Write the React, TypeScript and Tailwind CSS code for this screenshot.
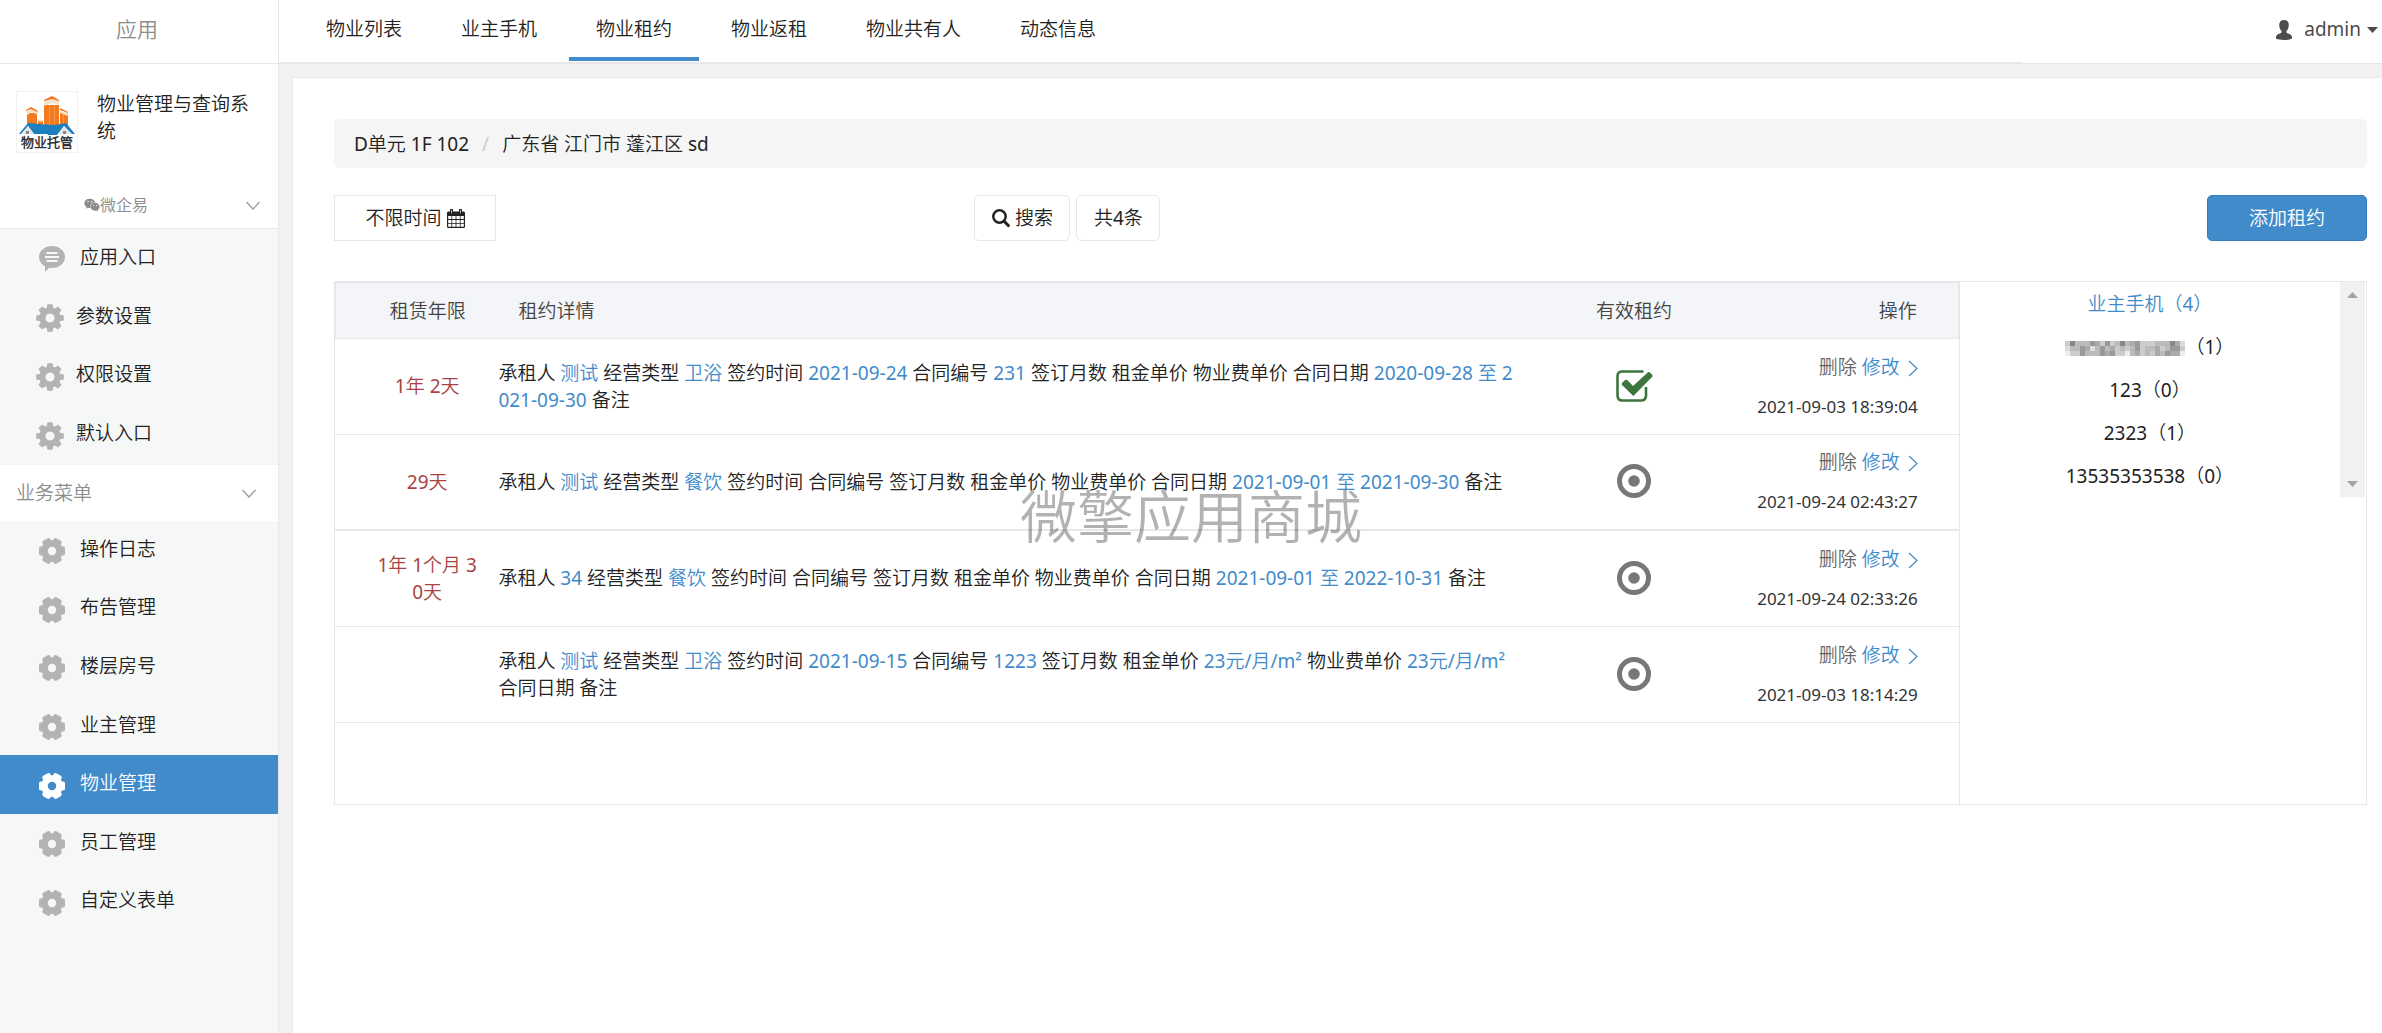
import { Fragment, type ReactNode } from "react";
import { FaWeixin } from "react-icons/fa";

const TABS = ["物业列表", "业主手机", "物业租约", "物业返租", "物业共有人", "动态信息"];
const SETTINGS = ["应用入口", "参数设置", "权限设置", "默认入口"];
const MENU = ["操作日志", "布告管理", "楼层房号", "业主管理", "物业管理", "员工管理", "自定义表单"];

type Lease = {
  term: string;
  // label / value pairs shown in the detail column
  detail: [string, string?][];
  valid: boolean;
  time: string;
};

const LEASES: Lease[] = [
  {
    term: "1年 2天",
    detail: [
      ["承租人", "测试"],
      ["经营类型", "卫浴"],
      ["签约时间", "2021-09-24"],
      ["合同编号", "231"],
      ["签订月数"],
      ["租金单价"],
      ["物业费单价"],
      ["合同日期", "2020-09-28 至 2021-09-30"],
      ["备注"],
    ],
    valid: true,
    time: "2021-09-03 18:39:04",
  },
  {
    term: "29天",
    detail: [
      ["承租人", "测试"],
      ["经营类型", "餐饮"],
      ["签约时间"],
      ["合同编号"],
      ["签订月数"],
      ["租金单价"],
      ["物业费单价"],
      ["合同日期", "2021-09-01 至 2021-09-30"],
      ["备注"],
    ],
    valid: false,
    time: "2021-09-24 02:43:27",
  },
  {
    term: "1年 1个月 30天",
    detail: [
      ["承租人", "34"],
      ["经营类型", "餐饮"],
      ["签约时间"],
      ["合同编号"],
      ["签订月数"],
      ["租金单价"],
      ["物业费单价"],
      ["合同日期", "2021-09-01 至 2022-10-31"],
      ["备注"],
    ],
    valid: false,
    time: "2021-09-24 02:33:26",
  },
  {
    term: "",
    detail: [
      ["承租人", "测试"],
      ["经营类型", "卫浴"],
      ["签约时间", "2021-09-15"],
      ["合同编号", "1223"],
      ["签订月数"],
      ["租金单价", "23元/月/m²"],
      ["物业费单价", "23元/月/m²"],
      ["合同日期"],
      ["备注"],
    ],
    valid: false,
    time: "2021-09-03 18:14:29",
  },
];

/* ---------- icons ---------- */

function BubbleIcon() {
  return (
    <svg viewBox="0 0 26 26" className="w-[26px] h-[26px] shrink-0" fill="currentColor">
      <path
        fillRule="evenodd"
        d="M13 0C20.200 0 26 4.900 26 11S20.200 22 13 22Q11.500 22 10.200 21.700L6 26V20.200C2.400 18.300 0 14.900 0 11 0 4.900 5.800 0 13 0ZM7.500 6v2h11V6ZM6 10v2h14v-2ZM7.500 14v2h11v-2Z"
      />
    </svg>
  );
}

function CogIcon() {
  return (
    <svg viewBox="-14 -14 28 28" className="w-7 h-7 shrink-0" fill="currentColor">
      {[0, 45, 90, 135].map((a) => (
        <path key={a} transform={`rotate(${a})`} d="M-2.600 -13.800h5.200L3.600 -8v3.200h-7.200V-8ZM-2.600 13.800h5.200L3.600 8v-3.200h-7.200V8Z" />
      ))}
      <circle r="7.600" fill="none" stroke="currentColor" strokeWidth="6" />
    </svg>
  );
}

function GearIcon() {
  return (
    <svg viewBox="-13 -13 26 26" className="w-[26px] h-[26px] shrink-0">
      {[0, 60, 120, 180, 240, 300].map((a) => (
        <rect key={a} transform={`rotate(${a})`} x="6" y="-4.500" width="7.200" height="9" rx="2.400" fill="currentColor" />
      ))}
      <circle r="7.500" fill="none" stroke="currentColor" strokeWidth="6.600" />
    </svg>
  );
}

function ChevronDown() {
  return (
    <svg viewBox="0 0 14 9" className="w-[14px] h-[9px]" fill="none" stroke="#999" strokeWidth="1.200">
      <path d="M.5 1 7 8l6.500-7" />
    </svg>
  );
}

function ChevronRight() {
  return (
    <svg viewBox="0 0 10 17" className="inline-block w-[10px] h-[17px] ml-2" fill="none" stroke="currentColor" strokeWidth="1.200">
      <path d="M1 1l8 7.500L1 16" />
    </svg>
  );
}

function UserIcon() {
  return (
    <svg viewBox="0 0 16 20" className="w-4 h-5" fill="currentColor">
      <path d="M8 0c3 0 4.800 1.900 4.800 5 0 2.600-1 4.800-2.400 6v1.600c.6 1 5.600 1.700 5.600 4.400v1.600C14.500 19.600 11.500 20 8 20S1.500 19.600 0 18.600V17c0-2.700 5-3.400 5.600-4.400V11C4.200 9.800 3.200 7.600 3.200 5 3.200 1.900 5 0 8 0Z" />
    </svg>
  );
}

function CalendarIcon() {
  return (
    <svg viewBox="0 0 18 19" className="w-[18px] h-[19px]">
      <path fill="currentColor" d="M1.300 2.500H3V1a1.200 1.200 0 0 1 3 0v1.500h6V1a1.200 1.200 0 0 1 3 0v1.500h1.700Q18 2.500 18 4v13.500Q18 19 16.700 19H1.300Q0 19 0 17.500V4Q0 2.500 1.300 2.500Z" />
      <path fill="#fff" d="M1.200 7h3.200v3H1.200zM5.200 7h3.400v3H5.200zM9.400 7h3.400v3H9.400zM13.600 7h3.200v3h-3.200zM1.200 10.900h3.200v3H1.200zM5.200 10.900h3.400v3H5.200zM9.400 10.900h3.400v3H9.400zM13.600 10.900h3.200v3h-3.200zM1.200 14.800h3.200v3H1.200zM5.200 14.800h3.400v3H5.200zM9.400 14.800h3.400v3H9.400zM13.600 14.800h3.200v3h-3.200z" />
      <path stroke="#fff" strokeWidth=".6" d="M4.500 1v3.500M13.500 1v3.500" />
    </svg>
  );
}

function SearchIcon() {
  return (
    <svg viewBox="0 0 18 20" className="w-[18px] h-5" fill="none" stroke="currentColor">
      <circle cx="7.500" cy="8.500" r="6.200" strokeWidth="2.500" />
      <path d="M12 13l4.300 4.600" strokeWidth="3" strokeLinecap="round" />
    </svg>
  );
}

function CheckIcon() {
  return (
    <svg viewBox="0 0 37 32" className="inline-block w-[37px] h-8" fill="none" stroke="#3c763d">
      <path strokeWidth="2.600" d="M27.500 1.500H6.500Q1.500 1.500 1.500 6v19.500q0 5 5 5H25q5 0 5-5V17" />
      <path fill="#3c763d" stroke="none" d="M5.800 13.200 9.300 9.800Q10.500 9.300 11.500 10.300L17 16 32 2.300q1-.6 1.900.2l2.500 2.600q.6.900-.1 1.700L17.300 26 5.800 14.800Q5.300 14 5.800 13.200Z" />
    </svg>
  );
}

function RingIcon() {
  return (
    <svg viewBox="0 0 34 34" className="inline-block w-[34px] h-[34px]">
      <circle cx="17" cy="17" r="14.500" fill="none" stroke="#777" strokeWidth="5" />
      <circle cx="17" cy="17" r="5.800" fill="#777" />
    </svg>
  );
}

function Logo() {
  return (
    <svg viewBox="0 0 60 60" className="w-[60px] h-[60px]">
      <path fill="#f47a20" d="M10 21h10v13H10zM27 13h15v21H27zM43 21h8v13h-8zM21 29h5v5h-5z" />
      <path fill="#f79a52" d="M32 13h1v20h-1zM37 13h1v20h-1zM46 21h1v12h-1z" />
      <path fill="#f3e3cc" d="M10 19l5-2 6 3v3l-6-3-5 3zM27 9l8-2 7 2v4l-7-2-8 3zM43 19l8 2v3l-8-3zM20 27l5 1v2l-5-1z" />
      <path fill="#f4701a" d="M9 18l5-3 7 4-1 1-6-3-5 2zM27 8l8-4 7 4v1l-7-2-8 2zM43 16l8 4v1l-8-3z" />
      <path fill="#1b7fc0" d="M2 42 11 31l12 1 8 10h-4l-2 0H17L11 34 4 42zM23 32l14 1 12-2 9 11h-3l-8-8-7 9H31z" />
      <path fill="#e4e6e8" d="M11 34l6 8H5zM47 34l7 8H42z" />
      <path fill="#888" d="M9 39h3v3H9zM46 39h3v3h-3z" />
      <text x="30" y="55" textAnchor="middle" fontSize="13" fontWeight="700" fill="#333">
        物业托管
      </text>
    </svg>
  );
}

// Censored phone number, one hex digit of grey per block
const MOSAIC = [
  "c8bbb9ac9cb8ba9cccbbb8ad",
  "dbb9adb9bacbcb9cbbacb99c",
  "ecc9bbb9a9ccebacbcab9aae",
];

function MaskedNumber() {
  return (
    <svg viewBox="0 0 120 15" className="inline-block w-[120px] h-[15px]" role="img" aria-label="***">
      {MOSAIC.map((row, y) =>
        row.split("").map((c, x) => (
          <rect key={`${x}-${y}`} x={x * 5} y={y * 5} width="5" height="5" fill={`#${c}${c}${c}`} />
        ))
      )}
    </svg>
  );
}

/* ---------- sidebar ---------- */

function MenuItem({ label, icon, active, inset }: { label: string; icon: ReactNode; active?: boolean; inset?: boolean }) {
  return (
    <li className="flex-1">
      <a
        href="#"
        className={[
          "flex items-center h-full pb-[2px]",
          inset ? "pl-9 gap-3" : "pl-[39px] gap-[15px]",
          active ? "bg-[#428bca] text-white" : "text-[#222]",
        ].join(" ")}
      >
        <span className={active ? "pt-1 text-white" : "pt-1 text-[#b3b3b3]"}>{icon}</span>
        {label}
      </a>
    </li>
  );
}

function Sidebar() {
  return (
    <aside className="flex flex-col w-[279px] shrink-0 border-r border-[#e7e7eb] bg-[#f6f8f7]">
      <div className="h-16 border-b border-[#e7e7eb] bg-white pr-1 pb-1 flex items-center justify-center text-[21px] text-[#8c8c8c]">
        应用
      </div>

      {/* App card */}
      <div className="bg-white border-b border-[#e7e7eb] h-[165px] flex flex-col justify-between">
        <div className="flex pt-[27px] pl-4">
          <div className="border border-[#f2f2f2] h-[62px]">
            <Logo />
          </div>
          <p className="ml-[19px] w-40 text-[#222]">物业管理与查询系统</p>
        </div>
        <div className="flex items-center justify-between h-[46px] pl-[84px] pr-[18px] text-base text-[#8c8c8c]">
          <span className="flex items-center">
            <FaWeixin size={16} />
            微企易
          </span>
          <ChevronDown />
        </div>
      </div>

      <ul className="flex flex-col h-[235px]">
        {SETTINGS.map((label, i) => (
          <MenuItem key={label} label={label} inset={i > 0} icon={i === 0 ? <BubbleIcon /> : <CogIcon />} />
        ))}
      </ul>

      <div className="flex items-center justify-between h-[57px] pl-4 pr-[22px] bg-white border-t border-[#f3f3f5] text-[#8c8c8c]">
        业务菜单
        <ChevronDown />
      </div>

      <ul className="flex flex-col h-[410px]">
        {MENU.map((label) => (
          <MenuItem key={label} label={label} active={label === "物业管理"} icon={<GearIcon />} />
        ))}
      </ul>
    </aside>
  );
}

/* ---------- main area ---------- */

function Header() {
  return (
    <header className="flex h-16 bg-white border-b border-[#e7e7eb]">
      <nav className="flex flex-1 gap-[5px] pl-5 border-b border-[#e7e7eb]">
        {TABS.map((tab) => (
          <a
            key={tab}
            href="#"
            className={[
              "flex items-center h-[61px] px-[27px] pt-[2px] border-b-4 text-[#222]",
              tab === "物业租约" ? "border-[#428bca]" : "border-transparent",
            ].join(" ")}
          >
            {tab}
          </a>
        ))}
      </nav>
      <div className="flex justify-end w-[360px] pr-1">
        <button className="flex items-center h-[59px] text-[#4c4c4c]">
          <UserIcon />
          <span className="ml-3 mr-[6px]">admin</span>
          <svg viewBox="0 0 11 6" className="w-[11px] h-[6px]" fill="currentColor">
            <path d="M0 0h11L5.500 6z" />
          </svg>
        </button>
      </div>
    </header>
  );
}

function LeaseTable() {
  return (
    <table className="w-full table-fixed border-separate border-spacing-0">
      <colgroup>
        <col className="w-[10%]" />
        <col className="w-[64%]" />
        <col className="w-[12%]" />
        <col className="w-[14%]" />
      </colgroup>
      <thead>
        <tr className="h-[57px] bg-[#f4f5f9] text-[#444]">
          <th className="pl-[38px] pr-4 pt-[2px] [font-weight:inherit] whitespace-nowrap border-y border-l border-[#e7e7eb]">租赁年限</th>
          <th className="pl-[21px] pt-[2px] text-left [font-weight:inherit] border-y border-[#e7e7eb]">租约详情</th>
          <th className="pt-[2px] [font-weight:inherit] border-y border-[#e7e7eb]">有效租约</th>
          <th className="pr-[41px] pt-[2px] text-right [font-weight:inherit] border-y border-r border-[#e7e7eb]">操作</th>
        </tr>
      </thead>
      <tbody>
        {LEASES.map((lease, i) => (
          <tr
            key={lease.time}
            className={i === 1 ? "h-24 [&>td]:border-b-2 [&>td]:border-[#e7e7eb]" : "h-24 [&>td]:border-b [&>td]:border-[#e7e7eb]"}
          >
            <td className="pl-[38px] pr-4 text-center break-all text-[#a94442]">{lease.term}</td>
            <td className="pl-px pr-[19px] break-all text-[#222]">
              {lease.detail.map(([name, value]) => (
                <Fragment key={name}>
                  {name} {value && <><span className="text-[#428bca]">{value}</span> </>}
                </Fragment>
              ))}
            </td>
            <td className="pb-[2px] text-center">{lease.valid ? <CheckIcon /> : <RingIcon />}</td>
            <td className="pr-[41px] text-right whitespace-nowrap leading-10">
              <div>
                <a href="#" className="text-[#666]">删除</a>{" "}
                <a href="#" className="text-[#428bca]">
                  修改
                  <ChevronRight />
                </a>
              </div>
              <div className="text-[17px] leading-10 text-[#333]">{lease.time}</div>
            </td>
          </tr>
        ))}
      </tbody>
    </table>
  );
}

function OwnerList() {
  return (
    <div className="flex flex-1 h-[215px]">
      <ul className="flex-1 pt-px text-center leading-[43px] text-[#222]">
        <li className="text-[#428bca]">业主手机（4）</li>
        <li>
          <MaskedNumber />（1）
        </li>
        <li>123（0）</li>
        <li>2323（1）</li>
        <li>13535353538（0）</li>
      </ul>
      {/* Scroll track */}
      <div className="flex flex-col items-center justify-between w-[25px] py-[10px] mr-px bg-[#f1f1f1] text-[#a3a3a3]">
        <svg viewBox="0 0 11 6" className="w-[11px] h-[6px]" fill="currentColor">
          <path d="M0 6h11L5.500 0z" />
        </svg>
        <svg viewBox="0 0 11 6" className="w-[11px] h-[6px]" fill="currentColor">
          <path d="M0 0h11L5.500 6z" />
        </svg>
      </div>
    </div>
  );
}

export default function App() {
  return (
    <div className="flex min-h-screen bg-[#f1f1f1] text-[19px] leading-[27px] font-['Noto_Sans','Noto_Sans_CJK_SC_DemiLight','Noto_Sans_CJK_SC',sans-serif]">
      <Sidebar />

      <div className="flex flex-col flex-1 min-w-0">
        <Header />

        <main className="flex-1 mt-[13px] ml-[13px] pt-[41px] pl-[41px] pr-[15px] bg-white border-t border-l border-[#e7e7eb]">
          {/* Breadcrumb */}
          <div className="flex items-center h-[49px] px-5 pt-[2px] rounded-[5px] bg-[#f5f5f5] text-[#222]">
            <span>D单元 1F 102</span>
            <span className="px-[13px] text-[#ccc]">/</span>
            <span>广东省 江门市 蓬江区 sd</span>
          </div>

          {/* Filters */}
          <div className="flex mt-[27px] h-[46px] text-[#222]">
            <div className="w-[31.5%]">
              <button className="flex items-center justify-center gap-[5px] w-[162px] h-full border border-[#e7e7eb]">
                不限时间
                <CalendarIcon />
              </button>
            </div>
            <div className="flex flex-1 gap-[6px]">
              <button className="flex items-center justify-center gap-[5px] w-24 border border-[#e7e7eb] rounded-[5px]">
                <SearchIcon />
                搜索
              </button>
              <button className="w-[84px] border border-[#e7e7eb] rounded-[5px]">共4条</button>
            </div>
            <button className="w-40 border border-[#357ebd] rounded-[5px] bg-[#428bca] text-white">添加租约</button>
          </div>

          <div className="flex mt-10 min-h-[524px] border border-[#e7e7eb]">
            <div className="w-4/5 border-r border-[#e7e7eb]">
              <LeaseTable />
            </div>
            <OwnerList />
          </div>
        </main>
      </div>

      {/* Watermark */}
      <div className="fixed inset-0 flex items-center justify-center pointer-events-none text-[57px] text-black/30">
        微擎应用商城
      </div>
    </div>
  );
}
